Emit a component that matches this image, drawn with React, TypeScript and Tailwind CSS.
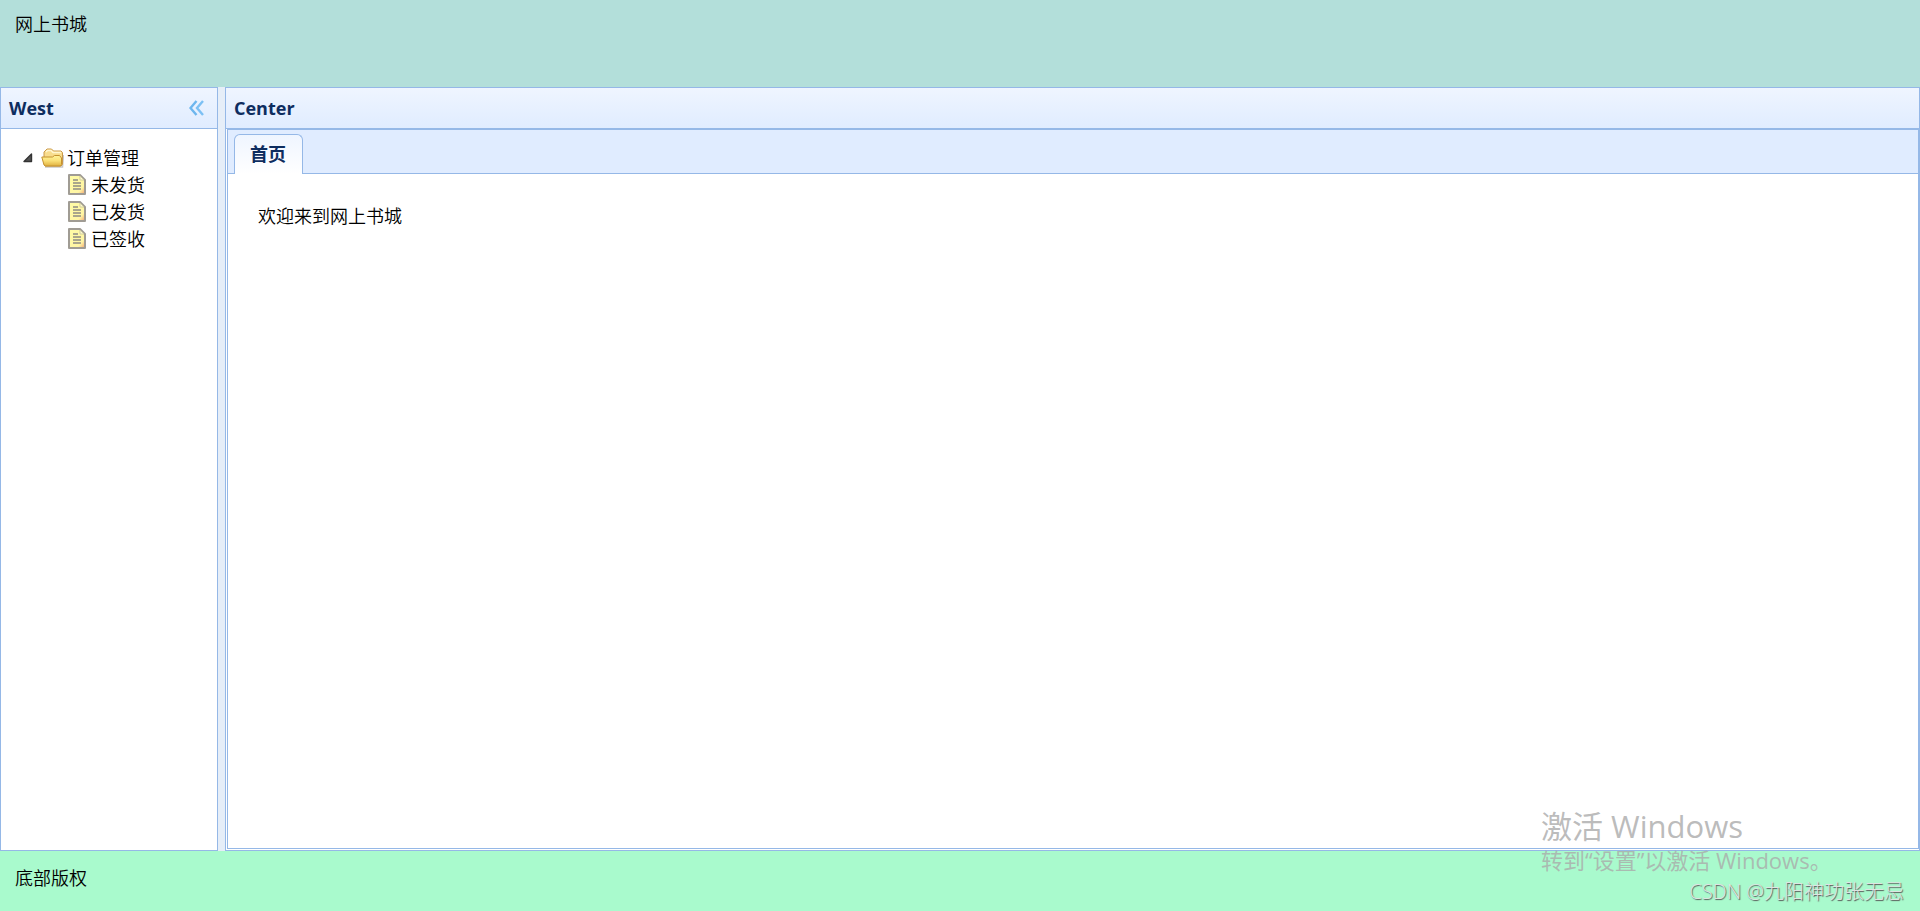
import { useState } from "react";

const orders = ["未发货", "已发货", "已签收"];

const ArrowIcon = () => (
  <svg width="10" height="10" viewBox="0 0 10 10" aria-hidden="true">
    <path d="M8.5 1 V8.5 H1 Z" fill="#555555" stroke="#333333" strokeWidth="1.4" strokeLinejoin="round" />
  </svg>
);

const CollapseIcon = () => (
  <svg width="16" height="16" viewBox="0 0 16 16" fill="none" aria-hidden="true">
    <path d="M7.5 1 L1.5 8 L7.5 15" stroke="#6db6ee" strokeWidth="2.4" />
    <path d="M14 1 L8 8 L14 15" stroke="#7cc0f4" strokeWidth="2.4" />
  </svg>
);

const FolderIcon = () => (
  <svg width="23" height="20" viewBox="0 0 23 20" aria-hidden="true">
    <defs>
      <linearGradient id="folderFront" x1="0" y1="0" x2="0" y2="1">
        <stop offset="0" stopColor="#fff39a" />
        <stop offset="0.5" stopColor="#fae077" />
        <stop offset="1" stopColor="#e0b040" />
      </linearGradient>
    </defs>
    <path d="M4 19 H21.5 L22.5 7" fill="none" stroke="#c9c9c9" strokeWidth="1.5" />
    <path
      d="M3 9 V4 L6 1 H10.5 L12.5 3 H20 L21.5 4.5 V16.5 L20 18 H4 Z"
      fill="#f8dc8c"
      stroke="#c9984a"
      strokeLinejoin="round"
    />
    <path d="M5 4 L6.5 2.5 H10 L12 4.5 H20" fill="none" stroke="#fff6d0" strokeWidth="1.5" />
    <path
      d="M0.8 9 H11.5 L13.5 7.5 H18.5 L20.5 10 V16.5 L19.5 18 H4.5 L3 17 Z"
      fill="url(#folderFront)"
      stroke="#c4922f"
      strokeLinejoin="round"
    />
  </svg>
);

const FileIcon = () => (
  <svg width="18" height="21" viewBox="0 0 18 21" aria-hidden="true">
    <defs>
      <linearGradient id="paper" x1="0" y1="0" x2="1" y2="1">
        <stop offset="0" stopColor="#fffda6" />
        <stop offset="0.75" stopColor="#fff5a4" />
        <stop offset="1" stopColor="#f4a070" />
      </linearGradient>
    </defs>
    <path
      d="M1 1 H12 L17 6 V20 H1 Z"
      fill="url(#paper)"
      stroke="#a09c94"
      strokeWidth="2"
      strokeLinejoin="round"
    />
    <path d="M12 2 V6 H16 Z" fill="#fffbd0" stroke="#c8c49a" strokeWidth="0.8" />
    <path
      d="M5 6 H10 M5 9 H13 M5 12 H13 M5 15 H13"
      fill="none"
      stroke="#8f8c84"
      strokeWidth="1.6"
    />
  </svg>
);

const App = () => {
  const [open, setOpen] = useState<boolean>(true);

  return (
    <div className="relative flex h-screen flex-col bg-[#e6eef8] font-['Open_Sans','Noto_Sans_CJK_SC',sans-serif] text-lg leading-6 font-[350] text-black">
      <header className="h-[87px] shrink-0 bg-[#b3dfda] px-[15px] py-3">网上书城</header>

      <div className="flex min-h-0 flex-1 gap-[7px]">
        <aside className="flex w-[218px] shrink-0 flex-col border border-[#95b8e7] bg-white">
          <div className="flex h-[41px] shrink-0 items-center justify-between border-b border-[#95b8e7] bg-linear-to-b from-[#eff5ff] to-[#e0ecff] pr-3 pl-2">
            <h2 className="font-bold text-[#0e2d5f]">West</h2>
            <button aria-label="Collapse">
              <CollapseIcon />
            </button>
          </div>
          <div className="px-[22px] py-[15px]">
            <button onClick={() => setOpen(!open)} className="flex h-[27px] items-center">
              <ArrowIcon />
              <span className="mr-[3px] ml-2">
                <FolderIcon />
              </span>
              订单管理
            </button>
            {open && (
              <ul>
                {orders.map((item) => (
                  <li key={item}>
                    <a href="#" className="flex h-[27px] items-center gap-[5px] pl-[45px]">
                      <FileIcon />
                      {item}
                    </a>
                  </li>
                ))}
              </ul>
            )}
          </div>
        </aside>

        <main className="flex min-w-0 flex-1 flex-col border border-[#95b8e7] bg-white">
          <div className="flex h-[41px] shrink-0 items-center border-b border-[#95b8e7] bg-linear-to-b from-[#eff5ff] to-[#e0ecff] px-2">
            <h2 className="font-bold text-[#0e2d5f]">Center</h2>
          </div>
          <div className="mb-px ml-px flex min-h-0 flex-1 flex-col border border-[#95b8e7]">
            <div className="flex h-11 shrink-0 items-end border-b border-[#95b8e7] bg-[#e0ecff] px-[6px]">
              <button className="-mb-px h-10 rounded-t-md border border-b-0 border-[#95b8e7] bg-linear-to-b from-[#eff5ff] to-white pr-4 pb-[2px] pl-[15px] font-bold text-[#0e2d5f]">
                首页
              </button>
            </div>
            <div className="p-[30px]">欢迎来到网上书城</div>
          </div>
        </main>
      </div>

      <footer className="h-[60px] shrink-0 bg-[#a9facd] px-[15px] py-[15px]">底部版权</footer>

      <div className="pointer-events-none absolute right-4 bottom-[3px] flex w-[363px] flex-col font-normal text-[#aaaaaa]/80">
        <p className="text-[31px] leading-9">激活 Windows</p>
        <p className="text-[22px] leading-8">转到“设置”以激活 Windows。</p>
        <p className="self-end text-xl leading-8 font-light whitespace-nowrap text-[#dde5e1] [text-shadow:1px_1px_1px_#555555]">
          CSDN @九阳神功张无忌
        </p>
      </div>
    </div>
  );
};

export default App;
